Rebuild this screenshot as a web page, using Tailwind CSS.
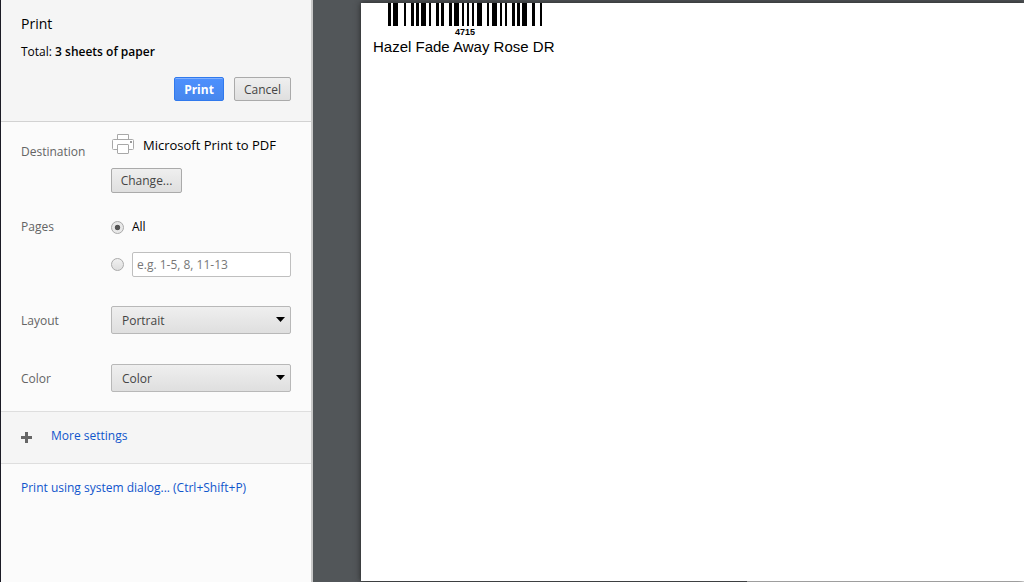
<!DOCTYPE html>
<html lang="en">
<head>
<meta charset="utf-8">
<title>Print</title>
<script src="https://cdn.jsdelivr.net/npm/@tailwindcss/browser@4"></script>
</head>
<body class="flex h-screen overflow-hidden bg-[#525659] font-['Open_Sans','Noto_Sans',sans-serif] text-xs text-black">
<aside class="flex w-[313px] shrink-0 flex-col border-l border-l-[#1b1b25] border-r-2 border-r-[#c8c8c8] bg-[#fbfbfb]">
  <header class="border-b border-[#d2d2d2] bg-[#f5f5f5] px-5 pt-3.5 pb-5">
    <h1 class="text-sm leading-5">Print</h1>
    <p class="mt-2 leading-5">Total: <b class="font-semibold">3 sheets of paper</b></p>
    <div class="mt-[15px] flex justify-end gap-2.5">
      <button class="h-6 w-[50px] rounded-xs border border-[#3079ed] bg-linear-to-b from-[#4d90fe] to-[#4787ed] pt-px font-bold text-white shadow-[inset_0_1px_#82b1ff]">Print</button>
      <button class="h-6 w-[57px] rounded-xs border border-[#aaa] bg-linear-to-b from-[#efefef] to-[#dfdfdf] pt-px text-[#444]">Cancel</button>
    </div>
  </header>
  <main class="grid grid-cols-[90px_minmax(0,1fr)] px-5 pt-3 text-[#646464]">
    <h2 class="pt-2 leading-5">Destination</h2>
    <div class="h-[83px]">
      <div class="flex h-[22px] items-center gap-2 text-[13px] text-black">
        <svg class="size-6" viewBox="0 0 24 24" fill="#fff" stroke="#a8a8a8" aria-hidden="true"><path d="M6.500 7.500V1.500H17.500V7.500"/><rect x="1.500" y="6.500" width="21" height="10" rx="1"/><rect x="6.500" y="11.500" width="11" height="9" rx=".5"/><path fill="#999" stroke="none" d="M19 8h2v2h-2z"/></svg>
        <span class="pt-px">Microsoft Print to PDF</span>
      </div>
      <button class="mt-3 h-[25px] w-[71px] rounded-xs border border-[#aaa] bg-linear-to-b from-[#efefef] to-[#dfdfdf] text-[#444]">Change...</button>
    </div>
    <h2 class="leading-5">Pages</h2>
    <div class="h-[89px]">
      <label class="flex h-5 items-center gap-2 text-black"><input type="radio" name="pages" checked class="size-[13px] appearance-none rounded-full border border-[#aaa] bg-[#e8e8e8] checked:bg-radial checked:from-[#555] checked:from-30% checked:to-[#e8e8e8] checked:to-40%">All</label>
      <div class="mt-[15px] flex items-center gap-2">
        <input type="radio" name="pages" aria-label="Page range" class="size-[13px] appearance-none rounded-full border border-[#aaa] bg-linear-to-b from-[#f0f0f0] to-[#dedede]">
        <input type="text" aria-label="Pages to print" placeholder="e.g. 1-5, 8, 11-13" class="h-[25px] min-w-0 flex-1 rounded-xs border border-[#bfbfbf] bg-white px-1 placeholder:text-[#777]">
      </div>
    </div>
    <label for="layout" class="pt-[5px] leading-5">Layout</label>
    <div class="relative h-[58px]">
      <select id="layout" class="h-[28px] w-full appearance-none rounded-xs border border-[#b8b8b8] bg-linear-to-b from-[#efefef] to-[#dfdfdf] px-2.5 pt-0.5 text-[#444]"><option>Portrait</option><option>Landscape</option></select>
      <svg class="pointer-events-none absolute top-[11px] right-1.5 h-[5px] w-[9px]" viewBox="0 0 9 5" aria-hidden="true"><path d="M0 0h9L4.500 5z"/></svg>
    </div>
    <label for="color" class="pt-[5px] leading-5">Color</label>
    <div class="relative h-[47px]">
      <select id="color" class="h-[28px] w-full appearance-none rounded-xs border border-[#b8b8b8] bg-linear-to-b from-[#efefef] to-[#dfdfdf] px-2.5 pt-0.5 text-[#444]"><option>Color</option><option>Black and white</option></select>
      <svg class="pointer-events-none absolute top-[11px] right-1.5 h-[5px] w-[9px]" viewBox="0 0 9 5" aria-hidden="true"><path d="M0 0h9L4.500 5z"/></svg>
    </div>
  </main>
  <button class="flex h-[53px] items-center gap-[19px] border-y border-[#dedede] bg-[#f5f5f5] px-5 pb-1 text-[#15c]">
    <svg class="mt-1 size-[11px]" viewBox="0 0 11 11" fill="#666" aria-hidden="true"><path d="M4 0h3v4h4v3H7v4H4V7H0V4h4z"/></svg>
    More settings
  </button>
  <a href="#" class="mx-5 mt-3.5 leading-5 text-[#15c]">Print using system dialog... (Ctrl+Shift+P)</a>
</aside>
<section class="flex min-w-0 flex-1 flex-col bg-linear-to-r from-[#525659] from-61% to-white to-61% pt-[3px]" aria-label="Print preview">
  <div class="-mt-[3px] flex min-h-0 flex-1 bg-[#525659] pt-[3px] pl-12">
    <div class="flex-1 bg-white pl-3 font-['Liberation_Sans',sans-serif] shadow-[0_0_6px_#222]">
      <figure class="w-max">
        <svg class="ml-[15px] h-[23px] w-[154px]" viewBox="0 0 154 23" role="img" aria-label="Barcode 4715"><path d="M0 0h3v23H0zM5 0h5v23H5zM16 0h2v23h-2zM23 0h3v23h-3zM28 0h3v23h-3zM33 0h5v23h-5zM41 0h2v23h-2zM48 0h3v23h-3zM53 0h3v23h-3zM61 0h3v23h-3zM66 0h5v23h-5zM74 0h2v23h-2zM79 0h2v23h-2zM84 0h2v23h-2zM89 0h5v23h-5zM99 0h2v23h-2zM104 0h5v23h-5zM112 0h2v23h-2zM117 0h2v23h-2zM124 0h3v23h-3zM129 0h3v23h-3zM134 0h5v23h-5zM144 0h3v23h-3zM152 0h2v23h-2z"/></svg>
        <figcaption><div class="ml-[15px] h-3 w-[154px] text-center text-[9px] leading-3 font-bold">4715</div><div class="text-[15px] leading-[18px]">Hazel Fade Away Rose DR</div></figcaption>
      </figure>
    </div>
  </div>
  <div class="h-px"></div>
</section>
</body>
</html>
